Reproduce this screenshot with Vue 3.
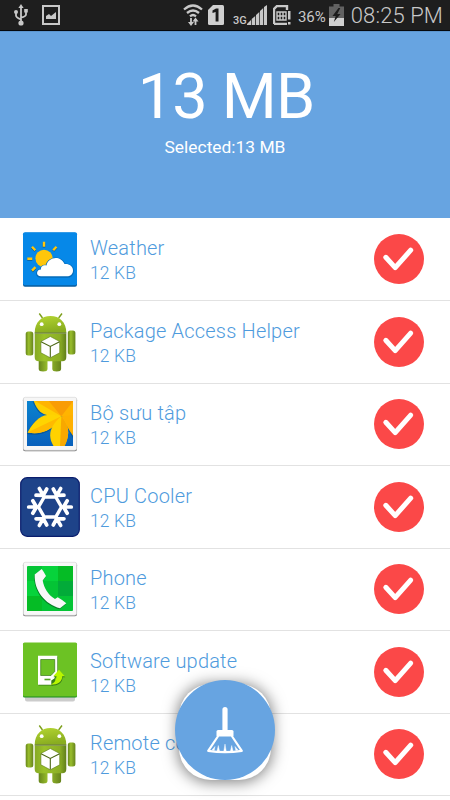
<template>
  <div class="screen">
    <header class="status-bar">
      <svg class="usb" width="14" height="22" viewBox="0 0 14 22">
        <path d="M7 3v15M2 8v3.5q0 2 5 4M12 7v3.5q0 2-5 3" fill="none" stroke="#c8c8c8" stroke-width="1.8" />
        <path d="M7 0l2.600 4H4.400z" fill="#c8c8c8" />
        <circle cx="7" cy="19" r="2.600" fill="#c8c8c8" />
        <circle cx="2" cy="8" r="2" fill="#c8c8c8" />
        <path d="M10.200 5h3.600v3.600h-3.600z" fill="#c8c8c8" />
      </svg>
      <svg class="photo" width="18" height="20" viewBox="0 0 18 20">
        <path d="M1 1h16v18H1z" fill="none" stroke="#c8c8c8" stroke-width="2" />
        <path d="M4 14v-3l3-2 2 2 5-4v7z" fill="#c8c8c8" />
      </svg>
      <svg class="wifi" width="20" height="22" viewBox="0 0 20 22">
        <g fill="none" stroke="#c8c8c8" stroke-width="2.300">
          <path d="M1 5.500Q10-2.500 19 5.500M4 9q6-5 12 0M7 12.300q3-2.500 6 0" />
          <path d="M8 14v6M12.500 21v-6" stroke-width="1.800" />
        </g>
        <path d="M5 18h6l-3 4zM9.500 17.500h6l-3-4z" fill="#c8c8c8" />
      </svg>
      <svg class="sim-one" width="16" height="20" viewBox="0 0 16 20">
        <path d="M5 0h9.500Q16 0 16 1.500v17q0 1.500-1.500 1.500h-13Q0 20 0 18.500V5z" fill="#d0d0d0" />
        <path d="M4.500 5.500L8 3.500h2.500v13H7.600V6.900l-3.100 1z" fill="#1b1b1b" />
      </svg>
      <span class="network">3G</span>
      <svg class="signal" width="20" height="20" viewBox="0 0 20 20">
        <path d="M0 20v-1L4 15v5zM4.700 20v-6l3.500-3v9zM9 20V10l3.300-3v13zM13 20V6l3.200-3v17zM17 20V2l3-2v20z" fill="#c8c8c8" />
      </svg>
      <svg class="sim-alert" width="18" height="20" viewBox="0 0 18 20">
        <path d="M1 19V4l3-3h10v4M1 19h13" fill="none" stroke="#c8c8c8" stroke-width="2.400" />
        <path d="M4 7h9v8H4zM7 7v8M10 7v8M4 11h9" fill="none" stroke="#c8c8c8" stroke-width="1.400" />
        <path d="M15 6h2.500v8.500H15zM15 17h2.500v2.500H15z" fill="#c8c8c8" />
      </svg>
      <span class="percent">36%</span>
      <svg class="battery" width="15" height="22" viewBox="0 0 15 22">
        <path d="M4.500 0h6v2.500H15V14H0V2.500h4.500z" fill="#626262" />
        <path d="M0 14h15v8H0z" fill="#d0d0d0" />
        <path d="M9.500 4L3.500 12h3.200L4.800 18l6.700-8H8.300l3-6z" fill="#1b1b1b" />
      </svg>
      <span class="clock">08:25 PM</span>
    </header>

    <section class="summary">
      <div class="total">13 MB</div>
      <div class="selected">Selected:13 MB</div>
    </section>

    <ul class="apps">
      <li v-for="app in apps" :key="app.name" class="app">
        <svg class="app-icon" width="60" height="60" viewBox="0 0 60 60">
          <g v-if="app.icon === 'weather'">
            <rect x="3" y="3.800" width="54" height="54" rx="2" fill="#075c9e" />
            <rect x="3" y="3.200" width="54" height="53" rx="2" fill="#0688e8" />
            <g stroke="#0b5c93" stroke-width="2.600" transform="translate(0 .7)">
              <path :d="rays" />
            </g>
            <path :d="rays" stroke="#ffc60b" stroke-width="2.400" />
            <circle cx="24" cy="29.300" r="8.600" fill="#ffc60b" />
            <path :d="cloud" fill="#056bb8" stroke="#056bb8" stroke-width="2" transform="translate(0 .5)" />
            <path :d="cloud" fill="#fff" />
          </g>

          <g v-else-if="app.icon === 'android'">
            <g fill="url(#limb)">
              <rect x="5.700" y="19.500" width="7.600" height="24" rx="2.500" />
              <rect x="47.800" y="18.500" width="7.600" height="24" rx="2.500" />
              <path d="M18.700 46h8.800v11q0 2.500-4.400 2.500T18.700 57zM32.300 46h8.800v11q0 2.500-4.400 2.500T32.300 57z" />
            </g>
            <path d="M19.300 1.500L22.500 6M42 1.500L38.600 6" stroke="#7d9f1c" stroke-width="1.400" />
            <path d="M14.700 20.700C14.700 10 21.500 3.900 30.500 3.900S46.300 10 46.300 20.700z" fill="url(#head)" />
            <circle cx="21.700" cy="12.200" r="1.900" fill="#fff" />
            <circle cx="39.300" cy="12.200" r="1.900" fill="#fff" />
            <path d="M14.700 21.500h31.600V45q0 4.300-4 4.300H18.700q-4 0-4-4.300z" fill="url(#torso)" />
            <path d="M14.700 21h31.600" stroke="#4a6311" stroke-width="1" />
            <path d="M30.300 24.500l9.400 5v11.300l-9.400 5-9.400-5V29.500z" fill="#fff" stroke="#5d7a18" stroke-width=".6" />
            <path d="M21 29.800l9.300 4.600 9.300-4.600M30.300 34.400v11" fill="none" stroke="#4b6613" stroke-width="1.100" />
          </g>

          <g v-else-if="app.icon === 'gallery'">
            <rect x="3" y="4.300" width="54" height="53" rx="2" fill="#777" />
            <rect x="3.300" y="3.300" width="53.400" height="53" rx="2" fill="#f6f6f6" stroke="#d2d2d2" stroke-width=".6" />
            <svg x="7" y="7" width="46" height="45" viewBox="7 7 46 45">
              <path d="M7 7h46v45H7z" fill="url(#blue)" />
              <g fill="#064985" opacity=".6" transform="translate(-1 1.500)">
                <path :d="petals" />
              </g>
              <path d="M13.500 6H54v19L41.300 22.300C30 22 18 18 13.500 6z" fill="#ffb400" />
              <path d="M28 6l13.300 16.300L54 6z" fill="#f99c05" />
              <path d="M41.300 22.300L13.500 6c3 10 8 14 15 15.500z" fill="#ffd000" />
              <path d="M41.300 22.300C46 30 49 37 54 43V21z" fill="#ffb000" />
              <path d="M41.300 22.300C28 19 18 19 7.500 38.500c14 3 27-3 33.800-16.200z" fill="#ffd400" />
              <path d="M41.300 22.300L7.500 38.500c14 3 27-3 33.800-16.200z" fill="#ffba00" />
              <path d="M41.300 22.300C28 34 28 43 34 53h10c6-11 6-21-2.700-30.700z" fill="#ffd200" />
              <path d="M41.300 22.300L40 53h4c6-11 6-21-2.700-30.700z" fill="#f8a800" />
            </svg>
          </g>

          <g v-else-if="app.icon === 'cooler'">
            <rect x=".7" y=".7" width="58.600" height="58.600" rx="6.500" fill="#1e4389" stroke="#0a1d6d" stroke-width="1.200" />
            <path d="M18.500 30l5.750-10h11.500l5.750 10-5.750 10h-11.500z" fill="none" stroke="#fff" stroke-width="3.400" />
            <g fill="none" stroke="#fff" stroke-width="3.700" stroke-linecap="round">
              <path
                v-for="n in 6"
                :key="n"
                d="M42 30h9.300M43.500 30l3.700-6.200M43.500 30l3.700 6.200"
                :transform="`rotate(${n * 60} 30 30)`"
              />
            </g>
          </g>

          <g v-else-if="app.icon === 'phone'">
            <rect x="3" y="4.200" width="54" height="53" rx="2" fill="#777" />
            <rect x="3.300" y="3.300" width="53.400" height="53" rx="2" fill="#f8f8f8" stroke="#d2d2d2" stroke-width=".6" />
            <rect x="7" y="7" width="46" height="45" rx="1" fill="#04c435" />
            <path d="M22 7h16v15H22zM7 22h15v15H7z" fill="#06d33b" />
            <path d="M38 22h15v15H38z" fill="#02ab39" />
            <path d="M7 37h15v15H7zM38 7h15v15H38z" fill="#05bc25" />
            <path :d="handset" fill="#057d25" transform="translate(-.5 1)" />
            <path :d="handset" fill="#f8f8f8" />
          </g>

          <g v-else-if="app.icon === 'update'">
            <path d="M5 54h50v3.500q0 2-2 2H7q-2 0-2-2z" fill="#ccc" />
            <rect x="3" y="1" width="54" height="54.600" rx="1.500" fill="#168c1c" />
            <rect x="3" y=".5" width="54" height="54" rx="1.500" fill="#6cc224" />
            <path d="M18 13.800h19.300V31l-3 5.500 1 2.500-3 3.800H18z" fill="#387f16" transform="translate(.5 .8)" />
            <path d="M18 13.800h19.300V31l-3 5.500-3 2v4.300H18z" fill="#fff" />
            <path d="M20.700 17.500h14v12L31 33.500H20.700z" fill="#6cc224" stroke="#397b19" stroke-width=".7" />
            <path d="M24.500 37.500h6" stroke="#52a51e" stroke-width="1.600" />
            <path :d="arrow" fill="#397b19" transform="translate(.4 1)" />
            <path :d="arrow" fill="#b9f500" />
          </g>
        </svg>

        <div class="info">
          <div class="name">{{ app.name }}</div>
          <div class="size">{{ app.size }}</div>
        </div>

        <svg class="check" width="50" height="50" viewBox="0 0 50 50">
          <circle cx="25" cy="25" r="25" fill="#fb4848" />
          <path d="M11.800 23.300l9.400 10.300 15.500-17.400" fill="none" stroke="#fff" stroke-width="5" stroke-linecap="round" stroke-linejoin="round" />
        </svg>
      </li>
    </ul>

    <button class="clean" aria-label="Clean">
      <svg width="100" height="100" viewBox="0 0 100 100">
        <circle cx="50" cy="50" r="50" fill="#67a4e1" />
        <path d="M50 29.500V52" stroke="#fff" stroke-width="5.200" stroke-linecap="round" />
        <path d="M43 50h14q1.500 0 1.500 1.500V56h-17v-4.500Q41.500 50 43 50z" fill="#fff" />
        <path d="M43.500 55.500L33.200 70.800q16.800 2.600 33.600 0L56.500 55.500z" fill="none" stroke="#fff" stroke-width="2.200" stroke-linejoin="round" />
        <path d="M42 71l1.300-5.500L44.500 71zM48.800 71l1.200-7 1.200 7zM55.500 71l1.200-5.500L58 71zM37 70l3-3.500-.8 4zM63 70l-3-3.500.8 4z" fill="#fff" stroke="#fff" stroke-width=".4" />
      </svg>
    </button>

    <svg width="0" height="0" class="defs">
      <linearGradient id="head" x1="0" y1="0" x2=".3" y2="1">
        <stop offset="0" stop-color="#b5d631" />
        <stop offset="1" stop-color="#89ad20" />
      </linearGradient>
      <linearGradient id="torso" x1="0" y1="0" x2="1" y2="0">
        <stop offset="0" stop-color="#86a924" />
        <stop offset=".3" stop-color="#9ac129" />
        <stop offset=".8" stop-color="#8bae25" />
        <stop offset="1" stop-color="#607e1b" />
      </linearGradient>
      <linearGradient id="limb" x1="0" y1="0" x2="1" y2="0">
        <stop offset="0" stop-color="#66851b" />
        <stop offset=".4" stop-color="#9abf2c" />
        <stop offset="1" stop-color="#66831c" />
      </linearGradient>
      <linearGradient id="blue" x1="0" y1="0" x2="0" y2="1">
        <stop offset="0" stop-color="#0a83cf" />
        <stop offset="1" stop-color="#0860bb" />
      </linearGradient>
    </svg>
  </div>
</template>

<script setup>
const apps = [
  { name: 'Weather', size: '12 KB', icon: 'weather' },
  { name: 'Package Access Helper', size: '12 KB', icon: 'android' },
  { name: 'Bộ sưu tập', size: '12 KB', icon: 'gallery' },
  { name: 'CPU Cooler', size: '12 KB', icon: 'cooler' },
  { name: 'Phone', size: '12 KB', icon: 'phone' },
  { name: 'Software update', size: '12 KB', icon: 'update' },
  { name: 'Remote controls', size: '12 KB', icon: 'android' },
]

// shapes that are drawn twice, once as their own shadow
const rays = 'M24 12.800v5M7.300 29.700h5M12 17.700l3.300 3.500M36.500 17.700l-3.300 3.500M12 41.700l3.500-3.500'
const cloud =
  'M21 47.300c-5.500 0-5-7 0-6.800-.5-3 2.500-5 5.500-4 1.500-8 13.500-11 18-1.500 4.500-.5 8.500 2 8.500 6.500 0 4-3 5.800-6 5.800z'
const petals =
  'M13.500 6c5 12 9 13 14 14-8 1-15 8-20 18.500 10 2 20 0 26-6-3 8-3 14 3 20.500h8c4-8 5-15 3-22 3 4 4 8 7 13V6z'
const handset =
  'M14.700 15.500L21.700 10q2 2.500 4.300 7l-3.300 4.500C24 29 28 36 35 40l2.700-1.800q5 2.800 8.600 6.100L40 49.300C25 45 14 32 14.700 15.500z'
const arrow = 'M39 27.800l5.800 6.500h-2.600c0 5-4 8.500-11.700 8.500 3.500-1.500 6-4.500 6-8.500h-3.300z'
</script>

<style>
body {
  margin: 0;
  overflow: hidden;
}
</style>

<style scoped>
.screen {
  position: relative;
  width: 450px;
  height: 800px;
  overflow: hidden;
  background: #fff;
  font-family: Roboto, 'Noto Sans', sans-serif;
}

.status-bar {
  box-sizing: border-box;
  display: flex;
  align-items: center;
  height: 31px;
  padding: 0 7px 0 14px;
  border-bottom: 1px solid #05080c;
  background: #1e1e1e;
  color: #c8c8c8;
  white-space: nowrap;
}

.status-bar svg {
  flex: none;
}

.photo {
  margin-left: 14px;
}

.wifi {
  margin-left: 123px;
}

.sim-one {
  margin-left: 5px;
}

.network {
  width: 14px;
  margin: 12px 0 0 9px;
  font-size: 11px;
  font-weight: 500;
  line-height: 12px;
}

.sim-alert {
  margin-left: 6px;
}

.percent {
  width: 29px;
  margin: 3px 0 0 7px;
  font-size: 15px;
  letter-spacing: -0.1px;
}

.battery {
  margin-left: 2px;
}

.clock {
  margin-left: auto;
  font-size: 22px;
  font-weight: 300;
  letter-spacing: 0.1px;
}

.summary {
  box-sizing: border-box;
  height: 187px;
  padding-top: 28px;
  border-top: 1px solid #5b95cf;
  background: #67a4e1;
  color: #fff;
  text-align: center;
}

.total {
  height: 74px;
  padding-left: 2px;
  font-size: 63px;
  line-height: 74px;
  letter-spacing: -0.8px;
}

.selected {
  margin-top: 2px;
  font-size: 17.4px;
  line-height: 22px;
}

.apps {
  margin: 0;
  padding: 0.6px 0 0;
  list-style: none;
}

.app {
  box-sizing: border-box;
  display: flex;
  align-items: center;
  height: 82.5px;
  padding: 0 26px 0 20px;
  border-bottom: 1px solid #e2e2e2;
}

.app-icon {
  flex: none;
}

.info {
  flex: 1;
  padding: 4px 0 0 10px;
  color: #4f9bdd;
  font-weight: 300;
  white-space: nowrap;
}

.name {
  font-size: 20px;
  line-height: 25px;
  letter-spacing: 0.19px;
}

.size {
  font-size: 17.5px;
  line-height: 25px;
  letter-spacing: 0.1px;
}

.check {
  flex: none;
}

.clean {
  position: absolute;
  top: 680px;
  left: 175px;
  width: 100px;
  height: 100px;
  padding: 0;
  border: 0;
  background: none;
}

.clean::before {
  content: '';
  position: absolute;
  inset: 4px 4px 0;
  border-radius: 32px;
  background: #fff;
  box-shadow: 0 1px 15px 1px rgba(0, 0, 0, 0.52);
}

.clean svg {
  position: relative;
  display: block;
}

.defs {
  position: absolute;
}
</style>
